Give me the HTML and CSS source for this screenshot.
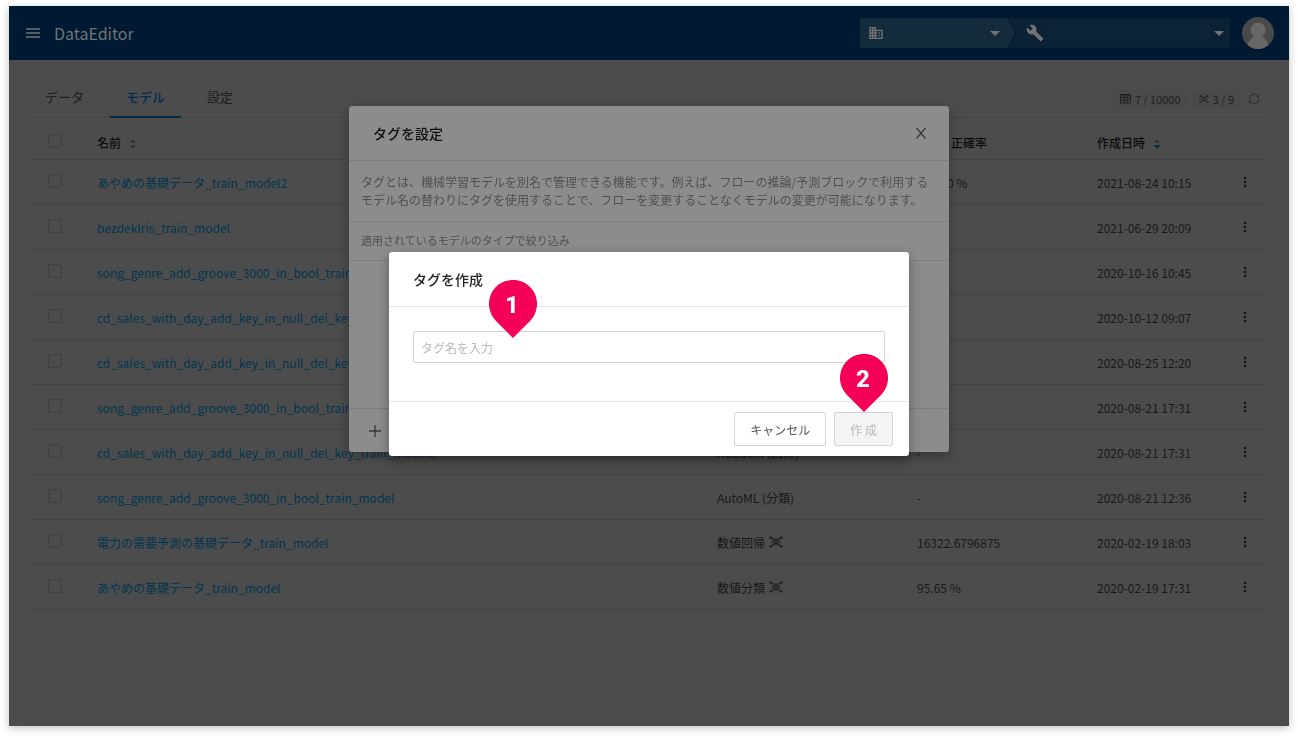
FILE: index.html
```html
<!DOCTYPE html>
<html lang="ja">
<head>
<meta charset="utf-8">
<title>DataEditor</title>
<link rel="stylesheet" href="styles.css">
</head>
<body>
<svg class="sprite" aria-hidden="true">
  <symbol id="net" viewBox="0 0 14 12"><path d="M2 2L12 10M12 2L2 10M1.500 1.500L7 3.500L12.500 1.500M1.500 10.500L7 8.500L12.500 10.500" fill="none" stroke="currentColor" stroke-width=".8"/><path d="M3 4.500V7.500M11 4.500V7.500" stroke="currentColor" stroke-width=".8"/><path fill="currentColor" d="M.5.500h2v2h-2zM11.500.500h2v2h-2zM.5 9.500h2v2h-2zM11.500 9.500h2v2h-2z"/><circle cx="7" cy="6" r="2" fill="#4c4c4c" stroke="currentColor"/><circle cx="7" cy="6" r=".8" fill="currentColor"/></symbol>
  <symbol id="dots" viewBox="0 0 4 12"><g fill="currentColor"><circle cx="2" cy="2" r="1.300"/><circle cx="2" cy="6" r="1.300"/><circle cx="2" cy="10" r="1.300"/></g></symbol>
</svg>
<div class="app">
  <header class="topbar">
    <button class="menu" aria-label="メニュー"><svg width="14" height="12" viewBox="0 0 14 12"><path d="M0 2h14M0 6h14M0 10h14" stroke="currentColor" stroke-width="1.500"/></svg></button>
    <h1 class="brand">DataEditor</h1>
    <div class="switcher">
      <button class="org" aria-label="組織">
        <svg width="16" height="16" viewBox="0 0 24 24"><path fill="currentColor" d="M12 7V3H2v18h20V7H12zM6 19H4v-2h2v2zm0-4H4v-2h2v2zm0-4H4V9h2v2zm0-4H4V5h2v2zm4 12H8v-2h2v2zm0-4H8v-2h2v2zm0-4H8V9h2v2zm0-4H8V5h2v2zm10 12h-8v-2h2v-2h-2v-2h2v-2h-2V9h8v10zm-2-8h-2v2h2v-2zm0 4h-2v2h2v-2z"/></svg>
        <span class="redacted"></span>
        <svg width="10" height="5" viewBox="0 0 10 5"><path fill="currentColor" d="M0 0h10L5 5z"/></svg>
      </button>
      <svg class="arrow" width="9" height="30" viewBox="0 0 9 30"><path class="arrow-fill" d="M0 0L8 15L0 30z"/><path class="arrow-line" d="M0 0L8 15L0 30"/></svg>
      <button class="project" aria-label="プロジェクト">
        <svg width="18" height="18" viewBox="0 0 24 24"><path fill="currentColor" d="M22.700 19l-9.100-9.100c.9-2.300.4-5-1.500-6.900-2-2-5-2.400-7.400-1.300L9 6 6 9 1.600 4.700C.4 7.100.9 10.100 2.900 12.100c1.900 1.900 4.600 2.400 6.900 1.500l9.100 9.100c.4.4 1 .4 1.400 0l2.300-2.300c.5-.4.5-1.100.1-1.400z"/></svg>
        <span class="redacted"></span>
        <svg width="10" height="5" viewBox="0 0 10 5"><path fill="currentColor" d="M0 0h10L5 5z"/></svg>
      </button>
    </div>
    <button class="avatar" aria-label="アカウント"><svg width="32" height="32" viewBox="0 0 32 32"><defs><clipPath id="disc"><circle cx="16" cy="16" r="16"/></clipPath></defs><g clip-path="url(#disc)"><path fill="#494949" d="M0 0h32v32H0z"/><g fill="#676767"><circle cx="16" cy="13" r="7.500"/><path d="M5 32C6 24 9 21 12 19.500h8C23 21 26 24 27 32z"/></g></g></svg></button>
  </header>
  <main class="content">
    <nav class="tabs">
      <a class="tab" href="#data">データ</a>
      <a class="tab active" href="#model">モデル</a>
      <a class="tab" href="#settings">設定</a>
      <div class="usage">
        <span class="chip"><svg width="11" height="10" viewBox="0 0 11 10"><path d="M.5.5h10v8.500H.5zM.5 3.500h10M.5 6h10M4 1v8M7 1v8M0 1h11" fill="none" stroke="currentColor"/></svg>7 / 10000</span>
        <span class="chip"><svg width="10" height="10"><use href="#net"/></svg>3 / 9</span>
        <button class="reload" aria-label="更新"><svg width="12" height="12" viewBox="0 0 12 12"><path d="M1 6A5 5 0 0 1 10.500 4M11 6A5 5 0 0 1 1.500 8M10.700 2v2.300H8.500M1.300 10V7.700H3.500" fill="none" stroke="currentColor"/></svg></button>
      </div>
    </nav>
    <table class="models">
      <colgroup><col class="c-check"><col><col class="c-type"><col class="c-acc"><col class="c-date"><col class="c-more"></colgroup>
      <thead><tr><th><input type="checkbox" aria-label="すべて選択"></th><th>名前<svg class="sort" width="8" height="10" viewBox="0 0 8 10"><path class="up" d="M1 4L4 0L7 4z"/><path class="down" d="M1 6L4 10L7 6z"/></svg></th><th>タイプ</th><th>精度 / 正確率</th><th>作成日時<svg class="sort desc" width="8" height="10" viewBox="0 0 8 10"><path class="up" d="M1 4L4 0L7 4z"/><path class="down" d="M1 6L4 10L7 6z"/></svg></th><th></th></tr></thead>
      <tbody>
        <tr><td><input type="checkbox" aria-label="選択"></td><td><a href="#m1">あやめの基礎データ_train_model2</a></td><td></td><td>100.00 %</td><td>2021-08-24 10:15</td><td><button class="more" aria-label="操作"><svg width="4" height="12"><use href="#dots"/></svg></button></td></tr>
        <tr><td><input type="checkbox" aria-label="選択"></td><td><a href="#m2">bezdekIris_train_model</a></td><td></td><td></td><td>2021-06-29 20:09</td><td><button class="more" aria-label="操作"><svg width="4" height="12"><use href="#dots"/></svg></button></td></tr>
        <tr><td><input type="checkbox" aria-label="選択"></td><td><a href="#m3">song_genre_add_groove_3000_in_bool_train_model</a></td><td></td><td></td><td>2020-10-16 10:45</td><td><button class="more" aria-label="操作"><svg width="4" height="12"><use href="#dots"/></svg></button></td></tr>
        <tr><td><input type="checkbox" aria-label="選択"></td><td><a href="#m4">cd_sales_with_day_add_key_in_null_del_key_train_model</a></td><td></td><td></td><td>2020-10-12 09:07</td><td><button class="more" aria-label="操作"><svg width="4" height="12"><use href="#dots"/></svg></button></td></tr>
        <tr><td><input type="checkbox" aria-label="選択"></td><td><a href="#m5">cd_sales_with_day_add_key_in_null_del_key_train_model</a></td><td></td><td></td><td>2020-08-25 12:20</td><td><button class="more" aria-label="操作"><svg width="4" height="12"><use href="#dots"/></svg></button></td></tr>
        <tr><td><input type="checkbox" aria-label="選択"></td><td><a href="#m6">song_genre_add_groove_3000_in_bool_train_model</a></td><td></td><td></td><td>2020-08-21 17:31</td><td><button class="more" aria-label="操作"><svg width="4" height="12"><use href="#dots"/></svg></button></td></tr>
        <tr><td><input type="checkbox" aria-label="選択"></td><td><a href="#m7">cd_sales_with_day_add_key_in_null_del_key_train_model2</a></td><td>XGBoost (回帰)</td><td>-</td><td>2020-08-21 17:31</td><td><button class="more" aria-label="操作"><svg width="4" height="12"><use href="#dots"/></svg></button></td></tr>
        <tr><td><input type="checkbox" aria-label="選択"></td><td><a href="#m8">song_genre_add_groove_3000_in_bool_train_model</a></td><td>AutoML (分類)</td><td>-</td><td>2020-08-21 12:36</td><td><button class="more" aria-label="操作"><svg width="4" height="12"><use href="#dots"/></svg></button></td></tr>
        <tr><td><input type="checkbox" aria-label="選択"></td><td><a href="#m9">電力の需要予測の基礎データ_train_model</a></td><td>数値回帰<svg class="net" width="14" height="12"><use href="#net"/></svg></td><td>16322.6796875</td><td>2020-02-19 18:03</td><td><button class="more" aria-label="操作"><svg width="4" height="12"><use href="#dots"/></svg></button></td></tr>
        <tr><td><input type="checkbox" aria-label="選択"></td><td><a href="#m10">あやめの基礎データ_train_model</a></td><td>数値分類<svg class="net" width="14" height="12"><use href="#net"/></svg></td><td>95.65 %</td><td>2020-02-19 17:31</td><td><button class="more" aria-label="操作"><svg width="4" height="12"><use href="#dots"/></svg></button></td></tr>
      </tbody>
    </table>
  </main>
</div>
<div class="overlay settings-layer">
  <section class="dialog settings" aria-label="タグを設定">
    <header class="dialog-head"><h2>タグを設定</h2><button class="close" aria-label="閉じる"><svg width="12" height="12" viewBox="0 0 12 12"><path d="M1.500 1L10.500 11.500M10.500 1L1.500 11.500" stroke="currentColor" stroke-width="1.200"/></svg></button></header>
    <p class="about">タグとは、機械学習モデルを別名で管理できる機能です。例えば、フローの推論/予測ブロックで利用するモデル名の替わりにタグを使用することで、フローを変更することなくモデルの変更が可能になります。</p>
    <p class="filter">適用されているモデルのタイプで絞り込み</p>
    <div class="tag-list"></div>
    <footer class="settings-foot"><button class="add" aria-label="タグを追加"><svg width="12" height="12" viewBox="0 0 12 12"><path d="M6 0v12M0 6h12" stroke="currentColor" stroke-width="1.300"/></svg></button></footer>
  </section>
</div>
<div class="overlay create-layer">
  <section class="dialog create" aria-label="タグを作成">
    <header class="dialog-head"><h2>タグを作成</h2></header>
    <div class="field"><input type="text" placeholder="タグ名を入力" aria-label="タグ名"></div>
    <footer class="actions"><button class="btn">キャンセル</button><button class="btn" disabled>作 成</button></footer>
    <div class="pin pin-name"><svg width="48" height="58" viewBox="0 0 48 58"><path fill="#f50057" d="M24 0C37.500 0 48 10.500 48 24C48 31 45 36.500 41 41L24 58L7 41C3 36.500 0 31 0 24C0 10.500 10.500 0 24 0z"/></svg><span>1</span></div>
    <div class="pin pin-submit"><svg width="48" height="58" viewBox="0 0 48 58"><path fill="#f50057" d="M24 0C37.500 0 48 10.500 48 24C48 31 45 36.500 41 41L24 58L7 41C3 36.500 0 31 0 24C0 10.500 10.500 0 24 0z"/></svg><span>2</span></div>
  </section>
</div>
</body>
</html>
```
FILE: styles.css
```css
* { box-sizing: border-box; }
body {
  margin: 0;
  min-height: 100vh;
  display: flex;
  padding: 6px 9px 12px;
  background: #fff;
  font-family: "Noto Sans CJK JP", sans-serif;
  font-size: 12px;
  line-height: 18px;
  color: #191919;
}
button, input { font: inherit; color: inherit; }
button { padding: 0; border: 0; background: none; display: flex; align-items: center; }
h1, h2, p { margin: 0; font-weight: 400; }
a { text-decoration: none; }
.sprite { position: absolute; width: 0; height: 0; }

.app { flex: 1; min-width: 0; background: #4c4c4c; box-shadow: 0 2px 8px rgba(0, 0, 0, .25); }
.topbar { display: flex; align-items: center; height: 54px; padding: 0 15px 0 17px; background: #001a33; color: #737373; }
.brand { flex: 1; margin-left: 14px; font-size: 16px; line-height: 24px; }
.switcher { display: flex; height: 30px; margin-right: 12px; border-radius: 3px; background: #0a2136; overflow: hidden; }
.org { width: 148px; padding: 0 8px; background: #142b3b; gap: 5px; }
.project { width: 213px; padding: 0 6px 0 9px; gap: 4px; }
.redacted { flex: 1; height: 18px; border-radius: 3px; }
.org .redacted { background: #122b3d; }
.project .redacted { background: #0c243a; }
.arrow-fill { fill: #142b3b; }
.arrow-line { fill: none; stroke: #001a33; }

.content { padding: 14px 20px 0; }
.tabs { display: flex; height: 44px; border-bottom: 1px solid #454545; gap: 10px; }
.tab { height: 44px; padding: 14px 16px 0; font-size: 13px; color: #202020; }
.tab.active { border-bottom: 2px solid #002b49; color: #002e4d; font-weight: 500; }
.usage { display: flex; align-items: center; gap: 6px; margin-left: auto; padding: 7px 9px 0 0; font-size: 11px; color: #202020; }
.chip { display: flex; align-items: center; gap: 4px; height: 18px; padding: 0 5px; border: 1px solid #484848; border-radius: 2px; background: #4a4a4a; }
.reload { margin-left: 2px; color: #2c2c2c; }

.models { width: 100%; table-layout: fixed; border-collapse: collapse; }
.c-check { width: 60px; }
.c-type { width: 200px; }
.c-acc { width: 180px; }
.c-date { width: 130px; }
.c-more { width: 50px; }
th, td { height: 45px; padding: 3px 8px 0; border-bottom: 1px solid #444; text-align: left; font-weight: 400; white-space: nowrap; }
th { height: 41px; padding-top: 10px; color: #0c0c0c; font-weight: 500; }
td a { color: #003651; }
th:first-child { padding: 6px 8px 0 19px; }
td:first-child { padding: 0 8px 2px 19px; }
td:last-child { padding: 0 8px 0 24px; }
.models input { appearance: none; display: block; width: 14px; height: 14px; margin: 0; border: 1px solid #3f3f3f; border-radius: 2px; }
.more { color: #161616; }
.sort { margin-left: 8px; vertical-align: -1px; fill: #363636; }
.sort.desc .down { fill: #002f4d; }
.net { margin-left: 4px; }

.overlay { position: fixed; inset: 0; display: flex; justify-content: center; align-items: flex-start; pointer-events: none; }
.settings-layer { padding-top: 106px; }
.create-layer { padding-top: 252px; }
.dialog { position: relative; border-radius: 3px; pointer-events: auto; }
.dialog-head { display: flex; align-items: center; justify-content: space-between; height: 55px; padding: 0 22px 0 24px; border-bottom: 1px solid #7c7c7c; }
.dialog-head h2 { font-size: 14px; line-height: 22px; font-weight: 500; }
.settings { width: 600px; background: #8c8c8c; box-shadow: 0 4px 12px rgba(0, 0, 0, .3); color: #111; }
.close, .add { color: #373737; }
.about, .filter { padding: 12px; border-bottom: 1px solid #7f7f7f; color: #505050; }
.filter { padding: 9px 12px 11px; font-size: 11px; }
.tag-list { height: 148px; border-bottom: 1px solid #7c7c7c; }
.settings-foot { display: flex; align-items: center; height: 43px; padding: 0 20px; }
.create { width: 520px; background: #fff; box-shadow: 0 4px 12px rgba(0, 0, 0, .35); color: #262626; }
.create .dialog-head { border-color: #e5e5e5; }
.field { padding: 24px 24px 38px; border-bottom: 1px solid #e5e5e5; }
.field input { display: block; width: 100%; height: 32px; padding: 1px 7px 0; border: 1px solid #d4d4d4; border-radius: 2px; background: #fff; }
.field input::placeholder { color: #b8b8b8; opacity: 1; }
.actions { display: flex; justify-content: flex-end; gap: 8px; padding: 10px 16px; }
.btn { height: 34px; padding: 2px 15px 0; border: 1px solid #d4d4d4; border-radius: 2px; color: #555; }
.btn:disabled { background: #f4f4f4; color: #b8b8b8; }
.pin { position: absolute; width: 48px; height: 58px; }
.pin-name { left: 100px; top: 28px; }
.pin-submit { right: 21px; top: 102px; }
.pin svg { display: block; }
.pin span { position: absolute; inset: 0 2px 0 0; text-align: center; font: 800 24px/50px Roboto, sans-serif; color: #fff; }
```
